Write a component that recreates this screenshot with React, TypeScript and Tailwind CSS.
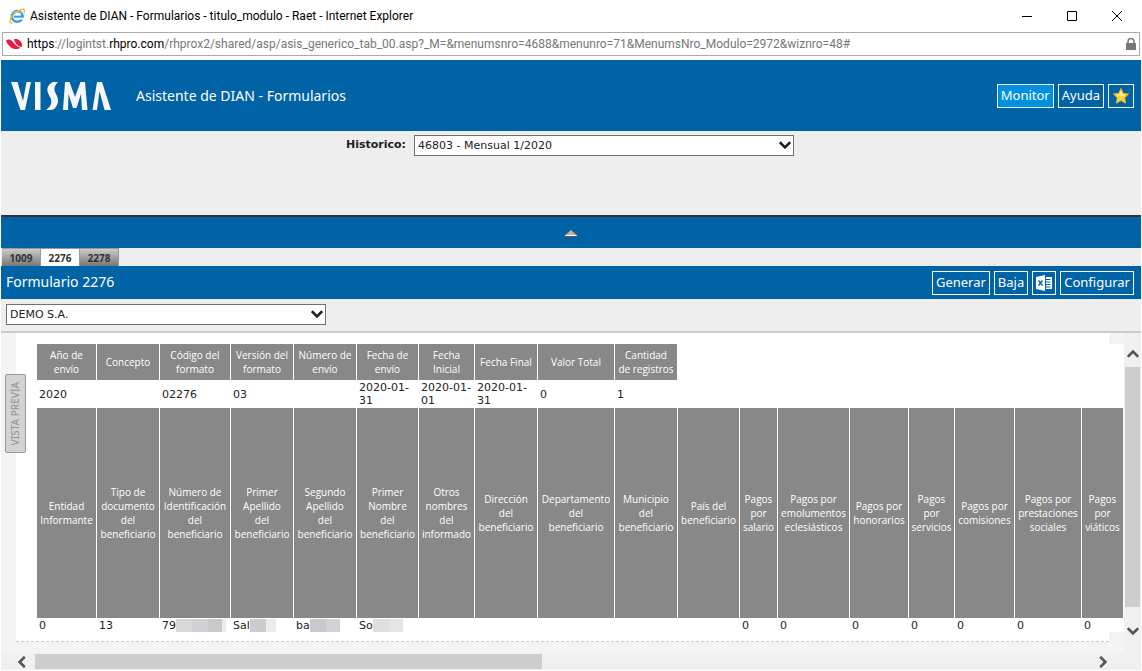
import type { ReactNode } from "react";

const UI = "font-['Noto_Sans','Open_Sans',sans-serif]";
const DATA = "font-['DejaVu_Sans',Verdana,sans-serif]";

const columnWidths = [60, 63, 71, 63, 63, 62, 56, 63, 77, 63, 62, 38, 72, 59, 46, 60, 67, 42];

const summaryHeaders = [
  ["Año de", "envío"],
  ["Concepto"],
  ["Código del", "formato"],
  ["Versión del", "formato"],
  ["Número de", "envío"],
  ["Fecha de", "envío"],
  ["Fecha", "Inicial"],
  ["Fecha Final"],
  ["Valor Total"],
  ["Cantidad", "de registros"],
];

const summaryValues = [
  ["2020"], [""], ["02276"], ["03"], [""],
  ["2020-01-", "31"], ["2020-01-", "01"], ["2020-01-", "31"], ["0"], ["1"],
];

const detailHeaders = [
  ["Entidad", "Informante"],
  ["Tipo de", "documento", "del", "beneficiario"],
  ["Número de", "Identificación", "del", "beneficiario"],
  ["Primer", "Apellido", "del", "beneficiario"],
  ["Segundo", "Apellido", "del", "beneficiario"],
  ["Primer", "Nombre", "del", "beneficiario"],
  ["Otros", "nombres", "del", "informado"],
  ["Dirección", "del", "beneficiario"],
  ["Departamento", "del", "beneficiario"],
  ["Municipio", "del", "beneficiario"],
  ["País del", "beneficiario"],
  ["Pagos", "por", "salario"],
  ["Pagos por", "emolumentos", "eclesiásticos"],
  ["Pagos por", "honorarios"],
  ["Pagos", "por", "servicios"],
  ["Pagos por", "comisiones"],
  ["Pagos por", "prestaciones", "sociales"],
  ["Pagos", "por", "viáticos"],
];

function Mask({ children }: { children: ReactNode }) {
  return <span className="flex h-[13px] overflow-hidden">{children}</span>;
}

const detailValues: ReactNode[] = [
  "0",
  "13",
  <span className="flex items-center">
    79
    <Mask>
      <i className="w-4 bg-[#d6d8d8]" />
      <i className="w-4 bg-[#d0d1d4]" />
      <i className="w-3.5 bg-[#c8c9cd]" />
      <i className="w-1 bg-[#ececec]" />
    </Mask>
  </span>,
  <span className="flex items-center">
    Sal
    <Mask>
      <i className="w-4 bg-[#cbcccf]" />
      <i className="w-2.5 bg-[#ebebeb]" />
    </Mask>
  </span>,
  <span className="flex items-center">
    ba
    <Mask>
      <i className="w-4 bg-[#c8c9cd]" />
      <i className="w-3.5 bg-[#d2d3d6]" />
    </Mask>
  </span>,
  <span className="flex items-center">
    So
    <Mask>
      <i className="w-4 bg-[#dfdfe0]" />
      <i className="w-3.5 bg-[#e5e5e6]" />
    </Mask>
  </span>,
  "", "", "", "", "",
  "0", "0", "0", "0", "0", "0", "0",
];

function Lines({ text }: { text: string[] }) {
  return (
    <>
      {text.map((line, i) => (
        <span key={i} className="block">{line}</span>
      ))}
    </>
  );
}

function HeaderCell({ text }: { text: string[] }) {
  return (
    <th className="border-r border-white bg-[#888] p-0 text-center align-middle font-['Open_Sans','Noto_Sans',sans-serif] text-[10px] leading-[14px] font-normal whitespace-nowrap text-white">
      <span className="flex flex-col items-center">
        <Lines text={text} />
      </span>
    </th>
  );
}

function Chevron({ className }: { className: string }) {
  return (
    <svg viewBox="0 0 12 8" className={className} fill="none" stroke="currentColor" strokeWidth="2.6">
      <path d="M.8 1.200 6 6.400l5.200-5.200" />
    </svg>
  );
}

function Select({ id, label, value, className }: { id: string; label?: string; value: string; className: string }) {
  return (
    <span className={`relative block ${className}`}>
      <select
        id={id}
        aria-label={label}
        className={`block h-[21px] w-full appearance-none border border-[#707070] bg-white px-[3px] pt-0.5 text-[11px] text-[#222] ${DATA}`}
      >
        <option>{value}</option>
      </select>
      <Chevron className="pointer-events-none absolute top-1.5 right-[3px] h-2 w-3 text-[#222]" />
    </span>
  );
}

function BarButton({ children, active, label }: { children: ReactNode; active?: boolean; label?: string }) {
  return (
    <button
      type="button"
      aria-label={label}
      className={`flex h-6 items-center border border-white px-[3px] text-[13px] leading-none text-white ${UI} ${active ? "bg-[#0090e0]" : ""}`}
    >
      {children}
    </button>
  );
}

function Tab({ children, active }: { children: ReactNode; active?: boolean }) {
  return (
    <button
      type="button"
      className={`h-[18px] w-[39px] border-t border-r border-[#999] text-[10px] leading-none font-bold text-[#333] ${UI} ${active ? "bg-white" : "bg-linear-to-b from-[#ccc] to-[#777]"}`}
    >
      {children}
    </button>
  );
}

function ExplorerIcon() {
  return (
    <svg viewBox="0 0 16 16" className="size-4" fill="none">
      <circle cx="8.200" cy="8.400" r="5.300" stroke="#2f9fe0" strokeWidth="2.600" />
      <path d="M5 8.700h9.500" stroke="#2f9fe0" strokeWidth="2" />
      <path d="M9.500 10.600H16" stroke="#fff" strokeWidth="1.600" />
      <path d="M3.600 5.800a5.400 5.400 0 0 1 9.200 0" stroke="#7fd3f7" strokeWidth="1.200" />
      <path d="M3.400 14.800C-.2 16 .2 11 4.600 6.400 9 2 14.600.2 15.400 2c.3.9-.1 2-.7 2.800" stroke="#f2b92d" strokeWidth="1.400" />
    </svg>
  );
}

function VismaLogo() {
  return (
    <svg viewBox="0 0 100 30" className="h-[30px] w-[100px]" fill="#f7f7f7" role="img" aria-label="VISMA">
      <path d="M0 1h6.500l5.500 19L15.500 1H20l-6 28H9.500z" />
      <path d="M24 1h5.500v28H24z" />
      <path d="M42 1h5c-3.500 3.500-4.500 7-2.500 11 2.500 5 3.500 7.500 1.500 12-1.200 3-3.500 5-7 5h-4c5.500-4 6.500-8 4-13-2.500-4.500-4-8-1-12 1-1.500 2.500-2.500 4-3z" />
      <path d="M54 1h4.500L64 16l5.500-15H74l2.500 28h-5.500l-1-16-4.500 14h-3.500L57.500 13 57 29h-5z" />
      <path d="M86 1h5l9 28h-6.500L88.500 10 86 29h-4.500z" />
    </svg>
  );
}

function ExcelIcon() {
  return (
    <svg viewBox="0 0 16 16" className="size-4" fill="white">
      <path d="M0 2 9 0v16L0 14z" />
      <path d="M10 2h6v12h-6v-1.500h4.500v-1H10v-1.500h4.500V9H10V7.500h4.500v-1H10V5h4.500V4H10z" />
      <path d="m2.500 5.500 4 5m0-5-4 5" stroke="#0063a6" strokeWidth="1.400" />
    </svg>
  );
}

export default function App() {
  return (
    <div className={`flex min-h-screen flex-col bg-white pr-px pb-px pl-px text-black ${UI}`}>
      <div className="flex h-8 items-center pr-0.5 pl-2">
        <ExplorerIcon />
        <h1 className="ml-[5px] flex-1 font-[Roboto,'Open_Sans',sans-serif] text-[12px]">
          Asistente de DIAN - Formularios - titulo_modulo - Raet - Internet Explorer
        </h1>
        <div className="flex items-center">
          <button type="button" aria-label="Minimizar" className="flex w-[45px] justify-center">
            <svg viewBox="0 0 10 10" className="size-2.5" stroke="black"><path d="M0 5.500h10" /></svg>
          </button>
          <button type="button" aria-label="Maximizar" className="flex w-[45px] justify-center">
            <svg viewBox="0 0 10 10" className="size-2.5" stroke="black" fill="none"><path d="M.5.5h9v9h-9z" /></svg>
          </button>
          <button type="button" aria-label="Cerrar" className="flex w-[45px] justify-center">
            <svg viewBox="0 0 10 10" className="size-2.5" stroke="black"><path d="m0 0 10 10M10 0 0 10" /></svg>
          </button>
        </div>
      </div>

      <div className="mr-px mb-1 ml-px flex h-6 items-center border border-[#aaa] px-[3px]">
        <svg viewBox="0 0 16 12" className="h-3 w-4" fill="#e51c44">
          <path d="M0 2.600C2.500.8 5 1.600 7 4c2 2.600 4 4.600 7.500 5.800C12 11.600 8 11.400 5 9.400 2.400 7.600.8 5.400 0 2.600z" />
          <path d="M8 1.400c3.500-1.200 7.500 1.600 8 5.200.1 1-.1 1.800-.6 2.400C12 8.200 9 5.400 8 1.400z" />
        </svg>
        <span className="ml-[5px] flex-1 font-[Roboto,'Open_Sans',sans-serif] text-[12px] text-[#777]">
          <span className="text-black">https</span>://logintst.<span className="text-black">rhpro.com</span>
          /rhprox2/shared/asp/asis_generico_tab_00.asp?_M=&amp;menumsnro=4688&amp;menunro=71&amp;MenumsNro_Modulo=2972&amp;wiznro=48#
        </span>
        <svg viewBox="0 0 10 12" className="h-3 w-2.5" fill="#777">
          <path d="M0 5h10v7H0z" />
          <path d="M2 6V3.500a3 3 0 0 1 6 0V6" fill="none" stroke="#777" strokeWidth="1.500" />
        </svg>
      </div>

      <header className="flex h-[71px] items-center bg-[#0063a6] pr-[7px] pl-2.5 text-white">
        <VismaLogo />
        <span className="ml-[25px] flex-1 text-[14px]">Asistente de DIAN - Formularios</span>
        <div className="flex gap-1">
          <BarButton active>Monitor</BarButton>
          <BarButton>Ayuda</BarButton>
          <BarButton label="Favoritos">
            <svg viewBox="0 0 18 18" className="size-[18px]">
              <path d="m9 1.500 2.300 4.900 5.200.7-3.800 3.700.9 5.400L9 13.600l-4.600 2.600.9-5.400-3.800-3.700 5.200-.7z" fill="#ffd43a" stroke="#e8b021" />
              <path d="m9 3.500 1.600 3.700 3.400.5-5 1.800-4.500-1.800 3-.5z" fill="#fff0a0" />
            </svg>
          </BarButton>
        </div>
      </header>

      <div className="flex h-21 items-start justify-center bg-[#eee] pt-1 pr-0.5">
        <label htmlFor="historico" className={`mr-2 text-[11px] leading-5 font-bold text-[#222] ${DATA}`}>Historico:</label>
        <Select id="historico" value="46803 - Mensual 1/2020" className="w-[380px]" />
      </div>

      <button type="button" aria-label="Contraer" className="flex h-[33px] items-center justify-center border-t-2 border-[#333] bg-[#0063a6]">
        <svg viewBox="0 0 14 8" className="h-2 w-3.5"><path d="M.5 7.500v-1L7 .500l6.500 6v1z" fill="#b4b4b4" stroke="#555" /><path d="M1.500 6.500h11" stroke="#fff" /></svg>
      </button>

      <nav className="flex bg-[#eee] pl-px">
        <Tab>1009</Tab>
        <Tab active>2276</Tab>
        <Tab>2278</Tab>
      </nav>

      <div className="flex h-[33px] items-center bg-[#0063a6] pr-[7px] pl-[5px] text-white">
        <h2 className="flex-1 pb-[3px] text-[14px]">Formulario 2276</h2>
        <div className="flex gap-1">
          <BarButton>Generar</BarButton>
          <BarButton>Baja</BarButton>
          <BarButton label="Excel"><ExcelIcon /></BarButton>
          <BarButton>Configurar</BarButton>
        </div>
      </div>

      <div className="h-[34px] border-b-2 border-[#ccc] bg-[#eee] pt-[5px] pl-[5px]">
        <Select id="empresa" label="Empresa" value="DEMO S.A." className="w-80" />
      </div>

      <div className="flex flex-1 bg-[#f4f4f4]">
        <main className="relative min-w-0 flex-1 overflow-hidden px-[15px]">
          <button
            type="button"
            className="absolute top-[41px] left-1 flex h-[79px] w-[21px] items-center justify-center rounded-xs border border-[#999] bg-[#d3d3d3] text-[10px] font-medium text-[#999]"
          >
            <span className="rotate-180 whitespace-nowrap [writing-mode:vertical-rl]">VISTA PREVIA</span>
          </button>
          <div className="border-b border-dashed border-[#ccc] bg-white pt-[11px] pb-[9px] pl-[21px]">
            <table className={`w-[1087px] table-fixed border-separate border-spacing-0 bg-white text-[11px] leading-[13px] text-[#222] ${DATA}`}>
              <colgroup>
                {columnWidths.map((width, i) => <col key={i} style={{ width }} />)}
              </colgroup>
              <tbody>
                <tr className="h-9">
                  {summaryHeaders.map((text, i) => <HeaderCell key={i} text={text} />)}
                </tr>
                <tr className="h-7">
                  {summaryValues.map((text, i) => (
                    <td key={i} className="p-0 pl-0.5 whitespace-nowrap"><Lines text={text} /></td>
                  ))}
                </tr>
                <tr className="h-[210px]">
                  {detailHeaders.map((text, i) => <HeaderCell key={i} text={text} />)}
                </tr>
                <tr className="h-3.5">
                  {detailValues.map((value, i) => (
                    <td key={i} className="p-0 pt-px pl-0.5 whitespace-nowrap">{value}</td>
                  ))}
                </tr>
              </tbody>
            </table>
          </div>
        </main>
        <div className="flex w-[17px] flex-col items-center bg-[#f0f0f0] pt-[17px] pb-[18px] text-[#555]">
          <Chevron className="h-2 w-3 rotate-180" />
          <div className="mt-[9px] mb-5 w-[15px] flex-1 bg-[#cdcdcd]" />
          <Chevron className="h-2 w-3" />
        </div>
      </div>

      <div className="flex h-[17px] items-center bg-[#f0f0f0] pr-8 pl-[15px] text-[#555]">
        <Chevron className="h-2 w-3 rotate-90" />
        <div className="mr-1.5 ml-[7px] flex h-[15px] flex-1">
          <div className="w-[48%] bg-[#cdcdcd]" />
        </div>
        <Chevron className="h-2 w-3 -rotate-90" />
      </div>
    </div>
  );
}
